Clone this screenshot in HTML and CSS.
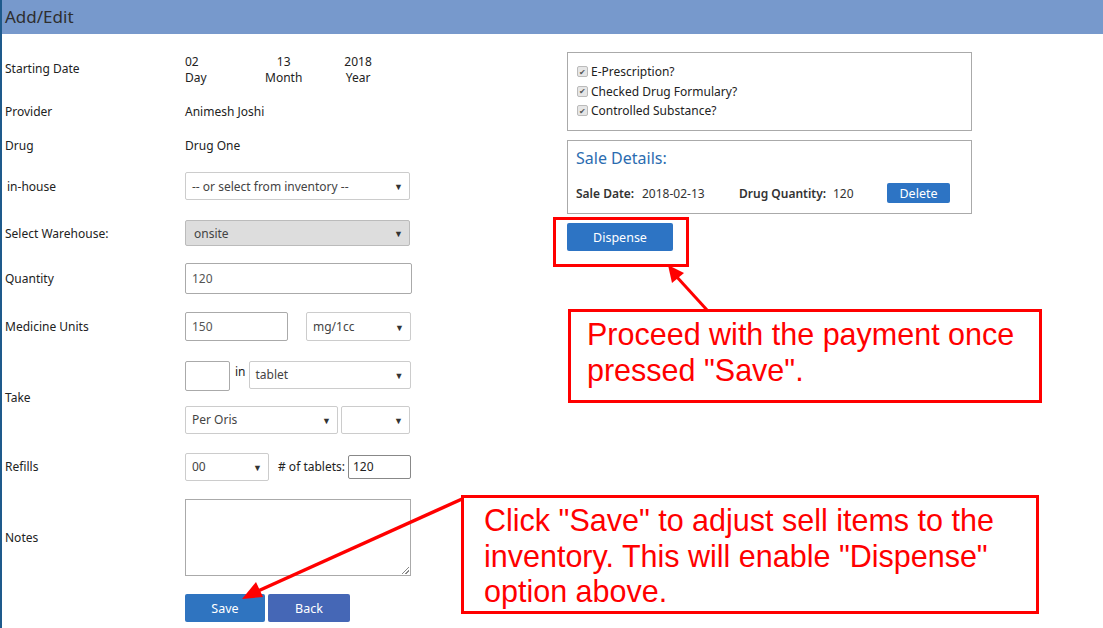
FILE: index.html
```html
<!DOCTYPE html>
<html>
<head>
<meta charset="utf-8">
<link rel="stylesheet" href="styles.css">
</head>
<body>
<div class="page">
  <div class="header">Add/Edit</div>
  <div class="content">
    <div class="form">
      <div class="row row-date">
        <div class="label">Starting Date</div>
        <div class="date">
          <div class="date-part dp-day"><span>02</span><span>Day</span></div>
          <div class="date-part dp-month"><span>13</span><span>Month</span></div>
          <div class="date-part dp-year"><span>2018</span><span>Year</span></div>
        </div>
      </div>
      <div class="row row-text">
        <div class="label">Provider</div>
        <div class="value">Animesh Joshi</div>
      </div>
      <div class="row row-drug">
        <div class="label">Drug</div>
        <div class="value">Drug One</div>
      </div>
      <div class="row row-inhouse">
        <div class="label label-indent">in-house</div>
        <div class="select w-full h28">-- or select from inventory --<span class="caret">▼</span></div>
      </div>
      <div class="row row-wh">
        <div class="label">Select Warehouse:</div>
        <div class="select select-gray w-full h26">onsite<span class="caret">▼</span></div>
      </div>
      <div class="row row-qty">
        <div class="label">Quantity</div>
        <div class="input w-qty h31">120</div>
      </div>
      <div class="row row-med">
        <div class="label">Medicine Units</div>
        <div class="inline">
          <div class="input w-med h29">150</div>
          <div class="select w-unit h29 ml18">mg/1cc<span class="caret">▼</span></div>
        </div>
      </div>
      <div class="row row-take">
        <div class="label">Take</div>
        <div class="take">
          <div class="inline take-top">
            <div class="input w-small h30"></div>
            <span class="in-word">in</span>
            <div class="select w-tablet h28">tablet<span class="caret">▼</span></div>
          </div>
          <div class="inline take-bottom">
            <div class="select w-oris h28">Per Oris<span class="caret">▼</span></div>
            <div class="select w-blank h28 ml3"><span class="caret">▼</span></div>
          </div>
        </div>
      </div>
      <div class="row row-refills">
        <div class="label">Refills</div>
        <div class="inline">
          <div class="select w-refill h28">00<span class="caret">▼</span></div>
          <span class="tablets">#&nbsp;of tablets:</span>
          <div class="input input-dark w-tab h24">120</div>
        </div>
      </div>
      <div class="row row-notes">
        <div class="label">Notes</div>
        <div class="textarea"><span class="grip"></span></div>
      </div>
      <div class="row row-buttons">
        <div class="label"></div>
        <div class="inline">
          <div class="btn btn-save">Save</div>
          <div class="btn btn-back">Back</div>
        </div>
      </div>
    </div>

    <div class="side">
      <div class="box checks">
        <div class="check"><span class="cb">✔</span>E-Prescription?</div>
        <div class="check"><span class="cb">✔</span>Checked Drug Formulary?</div>
        <div class="check"><span class="cb">✔</span>Controlled Substance?</div>
      </div>
      <div class="box sale">
        <div class="sale-title">Sale Details:</div>
        <div class="sale-row">
          <span class="sl sl-date">Sale Date:</span>
          <span class="sv sv-date">2018-02-13</span>
          <span class="sl sl-qty">Drug Quantity:</span>
          <span class="sv sv-qty">120</span>
          <span class="btn btn-delete">Delete</span>
        </div>
      </div>
      <div class="btn btn-dispense">Dispense</div>
    </div>
  </div>

  <svg class="arrows" width="1103" height="628" viewBox="0 0 1103 628">
    <rect x="554.5" y="218.5" width="133" height="47" fill="none" stroke="#ff0000" stroke-width="3"/>
    <line x1="707" y1="310" x2="676" y2="276" stroke="#ff0000" stroke-width="3"/>
    <polygon points="668,265 684,273 672,283" fill="#ff0000"/>
    <line x1="462" y1="499" x2="258" y2="591" stroke="#ff0000" stroke-width="3.5"/>
    <polygon points="242,599 256,582 263,597" fill="#ff0000"/>
  </svg>

  <div class="note note-pay">Proceed with the payment once pressed "Save".</div>
  <div class="note note-save">Click "Save" to adjust sell items to the inventory. This will enable "Dispense" option above.</div>
</div>
</body>
</html>
```

FILE: styles.css
```css
* { box-sizing: border-box; }
html, body { margin: 0; padding: 0; background: #fff; }
body {
  font-family: "Noto Sans", "Open Sans", sans-serif;
  font-size: 12px;
  color: #222;
}
.page {
  position: relative;
  width: 1103px;
  height: 628px;
  overflow: hidden;
  border-left: 2px solid #1e5a8c;
}
.header {
  height: 34px;
  background: #7799cc;
  color: #2e2e2e;
  font-size: 17px;
  line-height: 34px;
  padding-left: 3px;
}
.content {
  display: flex;
}
.form {
  width: 560px;
  padding-top: 18px;
  padding-left: 3px;
  display: flex;
  flex-direction: column;
  gap: 17px;
}
.row {
  display: flex;
  align-items: center;
}
.label {
  width: 180px;
  flex: none;
}
.label-indent { padding-left: 2px; }
.row-date { height: 32px; }
.row-text { height: 20px; }
.row-drug { height: 14px; }
.row-inhouse { height: 34px; }
.row-wh { height: 26px; }
.row-qty { height: 31px; }
.row-med { height: 31px; }
.row-take { height: 76px; }
.row-refills { height: 29px; }
.row-notes { height: 79px; }
.row-buttons { height: 28px; }

.date { display: flex; padding-top: 4px; }
.date-part {
  display: flex;
  flex-direction: column;
  line-height: 16px;
}
.dp-day { width: 80px; }
.dp-month { align-items: center; }
.dp-year { align-items: center; margin-left: 42px; }

.inline { display: flex; align-items: center; }

.select, .input {
  position: relative;
  border: 1px solid #cccccc;
  border-radius: 2px;
  background: #fff;
  color: #444;
  padding-left: 6px;
  display: flex;
  align-items: center;
  flex: none;
}
.input { border-color: #aaaaaa; color: #555; padding-left: 6px; }
.input-dark { border-color: #888; color: #222; padding-left: 4px; }
.select-gray { background: #dddddd; border-color: #bbbbbb; padding-left: 8px; }
.caret {
  position: absolute;
  right: 6px;
  top: 50%;
  transform: translateY(-50%);
  font-size: 9px;
  color: #333;
}
.w-full { width: 225px; }
.w-qty { width: 227px; }
.w-med { width: 103px; }
.w-unit { width: 105px; }
.w-small { width: 45px; }
.w-tablet { width: 162px; }
.w-oris { width: 153px; }
.w-blank { width: 69px; }
.w-refill { width: 84px; }
.w-tab { width: 63px; }
.h24 { height: 24px; }
.h26 { height: 26px; }
.h28 { height: 28px; }
.h29 { height: 29px; }
.h30 { height: 30px; }
.h31 { height: 31px; }
.ml18 { margin-left: 18px; }
.ml3 { margin-left: 3px; }
.in-word { margin: 0 3px 0 5px; align-self: flex-start; line-height: 22px; }
.take { display: flex; flex-direction: column; gap: 15px; }
.take-top { align-items: flex-start; }
.take-bottom { height: 28px; }
.tablets { margin-left: 9px; margin-right: 3px; }
.textarea {
  position: relative;
  width: 226px;
  height: 77px;
  border: 1px solid #aaaaaa;
}
.grip {
  position: absolute;
  right: 1px;
  bottom: 1px;
  width: 7px;
  height: 7px;
  background: linear-gradient(135deg, transparent 45%, #888 45%, #888 55%, transparent 55%, transparent 70%, #888 70%, #888 80%, transparent 80%);
}
.btn {
  color: #fff;
  border-radius: 2px;
  display: flex;
  align-items: center;
  justify-content: center;
  font-size: 12.5px;
}
.btn-save { width: 80px; height: 28px; background: #2f74c0; }
.btn-back { width: 82px; height: 28px; background: #4567b6; margin-left: 3px; }

.side {
  width: 405px;
  margin-left: 5px;
  padding-top: 18px;
  display: flex;
  flex-direction: column;
}
.box {
  border: 1px solid #aaaaaa;
}
.checks {
  height: 79px;
  padding: 9px 9px;
}
.check {
  display: flex;
  align-items: center;
  height: 19.5px;
}
.cb {
  width: 11px;
  height: 11px;
  border: 1px solid #bbb;
  border-radius: 2px;
  background: #e6e6e6;
  color: #555;
  font-size: 8px;
  line-height: 8px;
  display: inline-flex;
  align-items: center;
  justify-content: center;
  margin-right: 3px;
}
.sale {
  margin-top: 9px;
  height: 74px;
  padding: 6px 8px 0 8px;
}
.sale-title {
  color: #2b6cb0;
  font-size: 16px;
  line-height: 22px;
}
.sale-row {
  display: flex;
  align-items: center;
  margin-top: 14px;
  height: 20px;
}
.sl { font-weight: 600; color: #333; }
.sv { color: #333; }
.sl-date { width: 66px; }
.sv-date { width: 97px; }
.sl-qty { width: 94px; }
.sv-qty { width: 54px; }
.btn-delete { width: 63px; height: 20px; background: #2d74c4; }
.btn-dispense {
  margin-top: 9px;
  width: 106px;
  height: 28px;
  background: #2d74c4;
}

.arrows {
  position: absolute;
  left: -2px;
  top: 0;
  pointer-events: none;
}
.note {
  position: absolute;
  border: 3px solid #ff0000;
  background: #fff;
  color: #ff0000;
  font-family: "Liberation Sans", Arial, sans-serif;
  font-size: 30.5px;
  line-height: 35.5px;
}
.note-pay {
  left: 566px;
  top: 309px;
  width: 474px;
  height: 94px;
  padding: 5px 10px 0 16px;
}
.note-save {
  left: 459px;
  top: 495px;
  width: 578px;
  height: 119px;
  padding: 5px 10px 0 20px;
}
```
